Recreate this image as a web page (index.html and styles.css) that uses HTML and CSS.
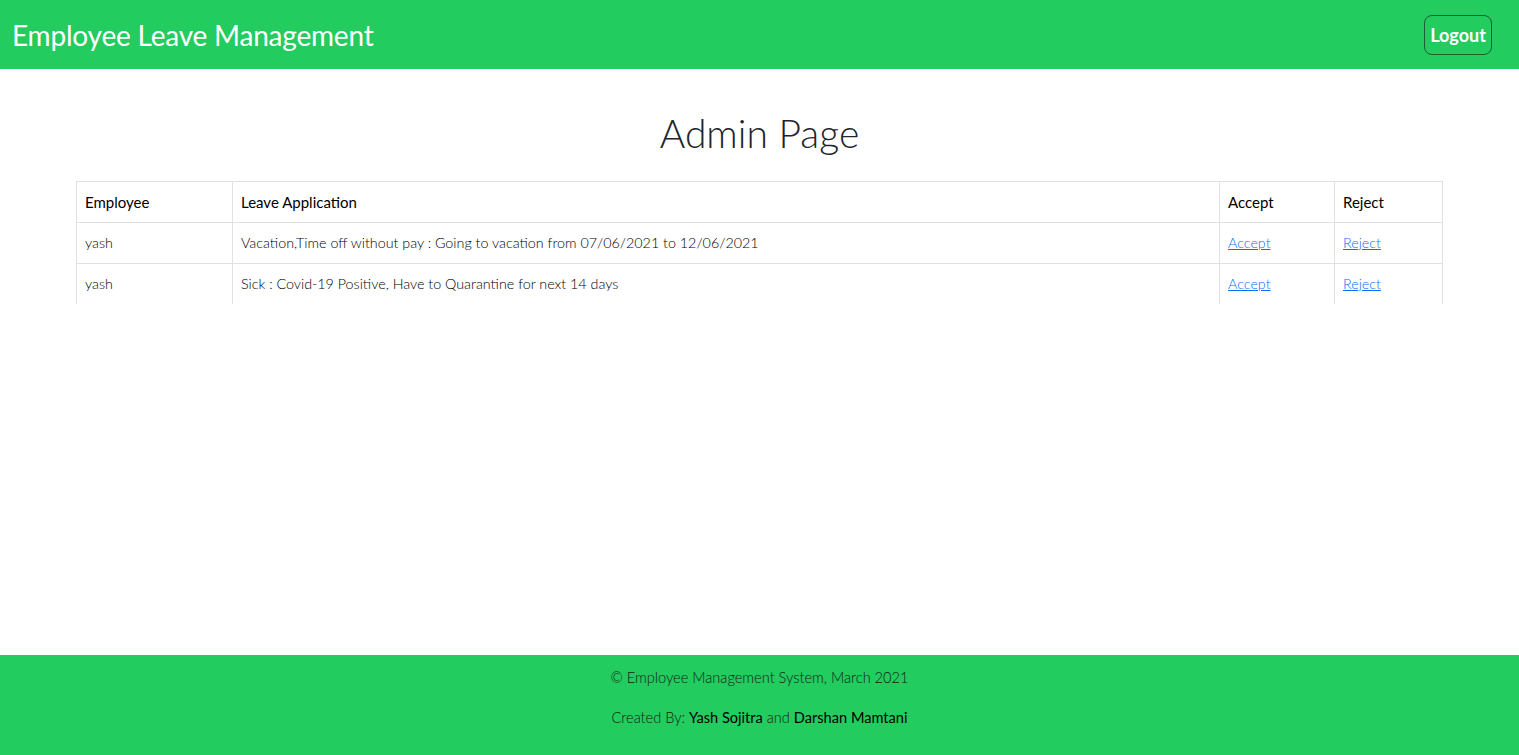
FILE: index.html
```html
<!DOCTYPE html>
<html lang="en">
<head>
<meta charset="utf-8">
<title>Admin Page</title>
<link rel="stylesheet" href="styles.css">
</head>
<body>
<header class="topbar">
  <div class="brand">Employee Leave Management</div>
  <button class="logout">Logout</button>
</header>
<main class="content">
  <h1 class="page-title">Admin Page</h1>
  <table class="leave-table">
    <colgroup>
      <col class="c-emp">
      <col class="c-app">
      <col class="c-acc">
      <col class="c-rej">
    </colgroup>
    <thead>
      <tr><th>Employee</th><th>Leave Application</th><th>Accept</th><th>Reject</th></tr>
    </thead>
    <tbody>
      <tr><td>yash</td><td>Vacation,Time off without pay : Going to vacation from 07/06/2021 to 12/06/2021</td><td><a href="#">Accept</a></td><td><a href="#">Reject</a></td></tr>
      <tr><td>yash</td><td>Sick : Covid-19 Positive, Have to Quarantine for next 14 days</td><td><a href="#">Accept</a></td><td><a href="#">Reject</a></td></tr>
    </tbody>
  </table>
</main>
<footer class="footer">
  <p>© Employee Management System, March 2021</p>
  <p>Created By: <b>Yash Sojitra</b> and <b>Darshan Mamtani</b></p>
</footer>
</body>
</html>
```
FILE: styles.css
```css
html, body { margin: 0; padding: 0; }
body {
  font-family: "Lato", "Open Sans", sans-serif;
  color: #212529;
  min-height: 100vh;
  display: flex;
  flex-direction: column;
  background: #fff;
}
.topbar {
  background: #22cc5e;
  height: 69px;
  display: flex;
  align-items: center;
  justify-content: space-between;
  padding: 0 27px 0 12px;
  box-sizing: border-box;
}
.brand {
  color: #fff;
  font-size: 28px;
  font-weight: 400;
  letter-spacing: -0.2px;
}
.logout {
  font-family: inherit;
  background: transparent;
  color: #fff;
  font-size: 18px;
  font-weight: 700;
  border: 1px solid #1b5e33;
  border-radius: 8px;
  width: 68px;
  height: 40px;
  padding: 0;
  margin-top: 1px;
}
.content {
  flex: 1;
  padding: 0 76px;
}
.page-title {
  text-align: center;
  font-weight: 300;
  font-size: 39px;
  line-height: 48px;
  margin: 40px 0 24px;
  color: #212529;
}
.leave-table {
  width: 100%;
  border-collapse: collapse;
  table-layout: fixed;
  font-size: 14.3px;
}
.c-emp { width: 156px; }
.c-acc { width: 115px; }
.c-rej { width: 108px; }
.leave-table th, .leave-table td {
  border: 1px solid #dee2e6;
  padding: 8px 8px;
  line-height: 24px;
  text-align: left;
}
.leave-table th { font-weight: 400; font-size: 15px; color: #000; }
.leave-table td { font-weight: 300; color: #000; }
.leave-table tbody tr:last-child td { border-bottom: none; }
.leave-table a { color: #0d6efd; text-decoration: underline; }
.footer {
  background: #22cc5e;
  height: 100px;
  text-align: center;
  font-size: 14.6px;
  color: #0e2416;
  font-weight: 300;
  padding-top: 12px;
  box-sizing: border-box;
}
.footer p { margin: 0 0 18px; line-height: 22px; }
.footer b { font-weight: 400; color: #000; }
```
